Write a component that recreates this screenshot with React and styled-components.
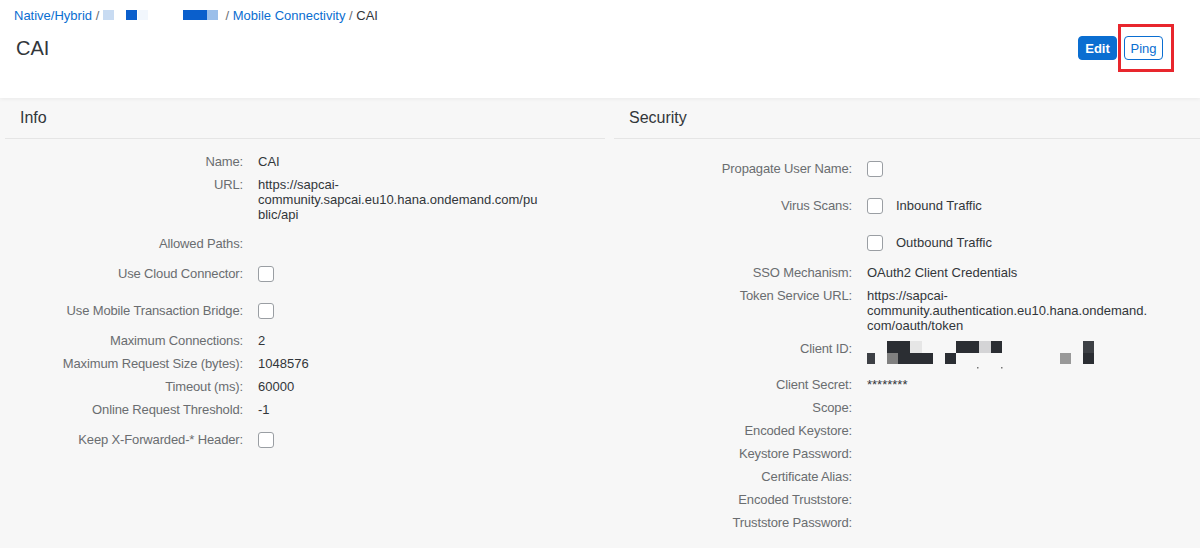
import styled, { createGlobalStyle } from "styled-components"

const Global = createGlobalStyle`
  html, body {
    margin: 0;
    padding: 0;
    background: #f7f7f7;
    font-family: "Liberation Sans", Arial, sans-serif;
    color: #32363a;
  }
`

const Page = styled.div`
  width: 1200px;
  height: 548px;
  overflow: hidden;
  background: #f7f7f7;
`

const Header = styled.header`
  position: relative;
  z-index: 1;
  height: 98px;
  box-sizing: border-box;
  padding: 6px 37px 0 14px;
  background: #fff;
  box-shadow: 0 1px 4px rgba(0, 0, 0, 0.06);
`

const Crumbs = styled.div`
  display: flex;
  align-items: center;
  height: 18px;
  font-size: 13px;
  color: #6a6d70;
  white-space: pre;

  svg {
    margin-right: 4px;
  }
`

const Crumb = styled.a`
  color: #0a6ed1;
  text-decoration: none;
  cursor: pointer;
`

const Current = styled.span`
  color: #32363a;
`

const TitleRow = styled.div`
  display: flex;
  align-items: center;
  justify-content: space-between;
  height: 24px;
  margin-top: 12px;
  padding-left: 2px;
`

const Title = styled.h1`
  margin: 0;
  font-size: 20px;
  font-weight: normal;
  color: #32363a;
`

const Actions = styled.div`
  display: flex;
  gap: 7px;
`

const Button = styled.button`
  position: relative;
  height: 24px;
  width: 39px;
  padding: 0;
  border-radius: 4px;
  font-family: inherit;
  font-size: 13px;
  cursor: pointer;
  border: 1px solid #0a6ed1;
  background: ${p => (p.$primary ? "#0a6ed1" : "#fff")};
  color: ${p => (p.$primary ? "#fff" : "#0a6ed1")};
  font-weight: ${p => (p.$primary ? "bold" : "normal")};
  ${p =>
    p.$marked &&
    `
    &::after {
      content: "";
      position: absolute;
      left: -7px;
      top: -13px;
      width: 56px;
      height: 48px;
      box-sizing: border-box;
      border: 3px solid #e8262d;
      pointer-events: none;
    }
  `}
`

const Panels = styled.main`
  display: grid;
  grid-template-columns: 600px 600px;
  column-gap: 9px;
  padding-left: 5px;
`

const Panel = styled.section``

const PanelHead = styled.h2`
  margin: 0;
  height: 40px;
  display: flex;
  align-items: center;
  padding-left: 15px;
  font-size: 16px;
  font-weight: normal;
  color: #32363a;
  border-bottom: 1px solid #e5e5e5;
`

const Form = styled.div`
  padding-top: 11px;
`

const Row = styled.div`
  display: grid;
  grid-template-columns: 238px 284px;
  column-gap: 15px;
  font-size: 13px;
  line-height: 15px;
  align-items: ${p => (p.$check ? "center" : "start")};
  height: ${p => (p.$check ? "37px" : "auto")};
  padding: ${p => (p.$check ? "0" : p.$spaced ? "10px 0 4px" : "4px 0")};
  min-height: ${p => (p.$check ? "0" : "15px")};
`

const Label = styled.div`
  text-align: right;
  letter-spacing: -0.14px;
  color: #6a6d70;
  white-space: nowrap;
`

const Value = styled.div`
  color: #32363a;
  overflow-wrap: break-word;
  word-break: normal;
`

const CheckLine = styled.label`
  display: flex;
  align-items: center;
  gap: 13px;
  color: #32363a;
`

const Box = styled.span`
  display: inline-block;
  width: 14px;
  height: 14px;
  border: 1px solid #9a9ea3;
  border-radius: 3px;
  background: #fff;
`

function Redacted({ blocks, width, height, dots = [] }) {
  return (
    <svg width={width} height={height} style={{ display: "block" }}>
      {blocks.map(([x, y, w, h, c], i) => (
        <rect key={i} x={x} y={y} width={w} height={h} fill={c} />
      ))}
      {dots.map(([x, y], i) => (
        <rect key={"d" + i} x={x} y={y} width="1.5" height="1.5" fill="#777" />
      ))}
    </svg>
  )
}

const crumbBlocks = [
  [0, 0, 11, 10, "#c8dbf2"],
  [23, 0, 11, 10, "#0a5fcc"],
  [35, 0, 10, 10, "#f2f7fd"],
  [80, 0, 24, 10, "#0a5fcc"],
  [104, 0, 11, 10, "#9bbfea"],
]

const clientBlocks = [
  [0, 12, 8, 11, "#3d4045"],
  [20, 0, 23, 12, "#2b2e33"],
  [43, 0, 12, 12, "#e6e6e6"],
  [20, 12, 11, 11, "#808080"],
  [31, 12, 35, 11, "#2b2e33"],
  [78, 12, 11, 11, "#2b2e33"],
  [89, 0, 23, 12, "#2b2e33"],
  [112, 0, 12, 12, "#d4d4d6"],
  [124, 0, 11, 12, "#2b2e33"],
  [193, 12, 11, 11, "#999"],
  [216, 0, 11, 12, "#3d4045"],
  [216, 12, 11, 11, "#2b2e33"],
]

const info = [
  { label: "Name", value: "CAI" },
  { label: "URL", value: "https://sapcai-community.sapcai.eu10.hana.ondemand.com/public/api" },
  { label: "Allowed Paths", value: "", spaced: true },
  { label: "Use Cloud Connector", check: true },
  { label: "Use Mobile Transaction Bridge", check: true },
  { label: "Maximum Connections", value: "2" },
  { label: "Maximum Request Size (bytes)", value: "1048576" },
  { label: "Timeout (ms)", value: "60000" },
  { label: "Online Request Threshold", value: "-1" },
  { label: "Keep X-Forwarded-* Header", check: true },
]

const security = [
  { label: "Propagate User Name", check: true },
  { label: "Virus Scans", check: true, text: "Inbound Traffic" },
  { label: "", check: true, text: "Outbound Traffic" },
  { label: "SSO Mechanism", value: "OAuth2 Client Credentials" },
  { label: "Token Service URL", value: "https://sapcai-community.authentication.eu10.hana.ondemand.com/oauth/token" },
  { label: "Client ID", redacted: true },
  { label: "Client Secret", value: "********" },
  { label: "Scope", value: "" },
  { label: "Encoded Keystore", value: "" },
  { label: "Keystore Password", value: "" },
  { label: "Certificate Alias", value: "" },
  { label: "Encoded Truststore", value: "" },
  { label: "Truststore Password", value: "" },
]

function Field({ f }) {
  return (
    <Row $check={f.check} $spaced={f.spaced}>
      <Label>{f.label ? f.label + ":" : ""}</Label>
      {f.check ? (
        <CheckLine>
          <Box />
          {f.text}
        </CheckLine>
      ) : f.redacted ? (
        <Value>
          <Redacted blocks={clientBlocks} width={230} height={28} dots={[[110, 26], [134, 26]]} />
        </Value>
      ) : (
        <Value>{f.value}</Value>
      )}
    </Row>
  )
}

export default function App() {
  return (
    <Page>
      <Global />
      <Header>
        <Crumbs>
          <Crumb>Native/Hybrid</Crumb>
          {" / "}
          <Redacted blocks={crumbBlocks} width={115} height={10} />
          {" / "}
          <Crumb>Mobile Connectivity</Crumb>
          {" / "}
          <Current>CAI</Current>
        </Crumbs>
        <TitleRow>
          <Title>CAI</Title>
          <Actions>
            <Button $primary>Edit</Button>
            <Button $marked>Ping</Button>
          </Actions>
        </TitleRow>
      </Header>
      <Panels>
        <Panel>
          <PanelHead>Info</PanelHead>
          <Form>
            {info.map(f => (
              <Field key={f.label} f={f} />
            ))}
          </Form>
        </Panel>
        <Panel>
          <PanelHead>Security</PanelHead>
          <Form>
            {security.map((f, i) => (
              <Field key={i} f={f} />
            ))}
          </Form>
        </Panel>
      </Panels>
    </Page>
  )
}
